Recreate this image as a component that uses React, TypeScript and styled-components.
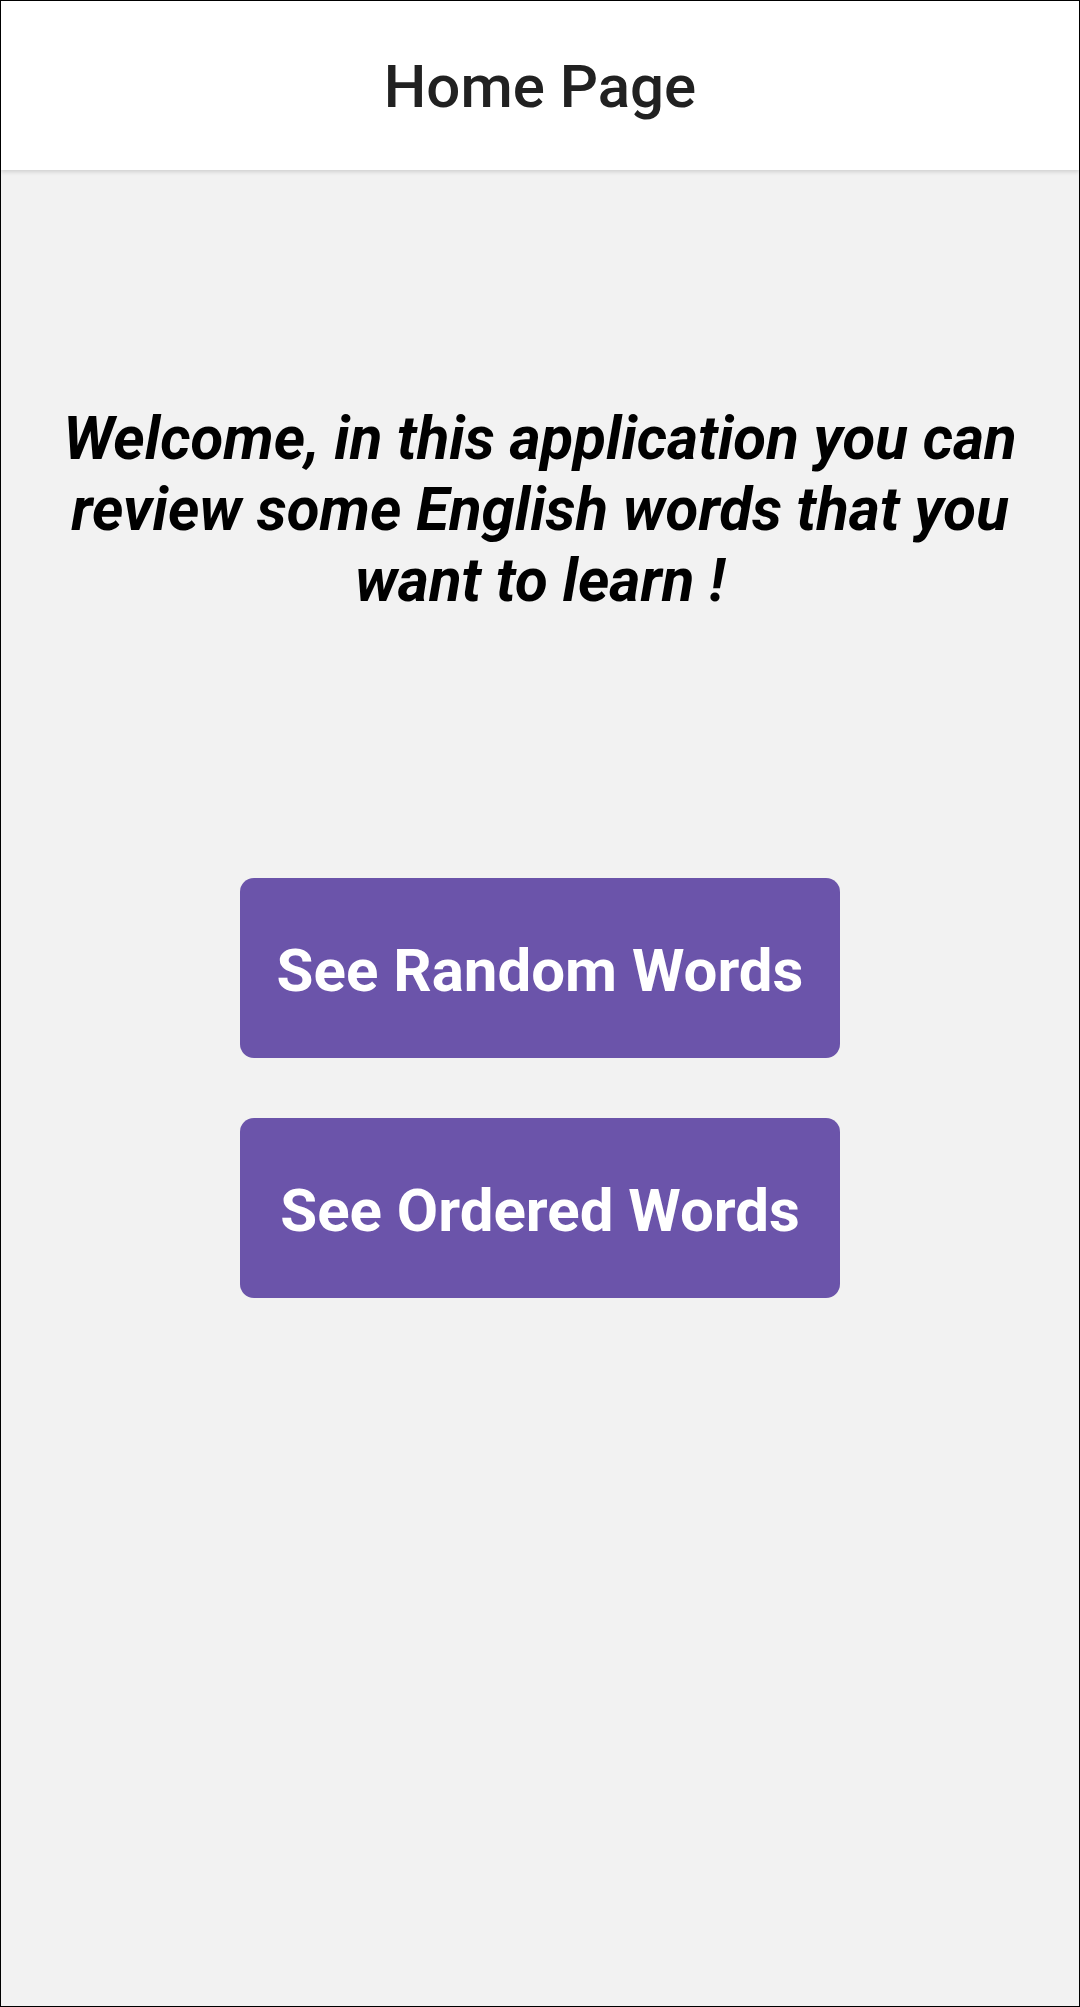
import React from "react";
import styled, { createGlobalStyle } from "styled-components";

const Global = createGlobalStyle`
  html, body { margin: 0; padding: 0; }
  body { font-family: Roboto, "Noto Sans", sans-serif; background: #f2f2f2; }
  * { box-sizing: border-box; }
`;

const Screen = styled.div`
  width: 1080px;
  height: 2007px;
  border: 1px solid #000;
  background: #f2f2f2;
  display: flex;
  flex-direction: column;
  overflow: hidden;
`;

const Header = styled.header`
  height: 169px;
  flex: none;
  background: #ffffff;
  display: flex;
  align-items: center;
  justify-content: center;
  box-shadow: 0 2px 4px rgba(0, 0, 0, 0.14);
  position: relative;
  z-index: 1;
`;

const Title = styled.h1`
  margin: 0;
  font-family: Roboto, sans-serif;
  font-weight: 500;
  font-size: 60px;
  color: #212121;
  line-height: 1;
  padding-top: 2px;
`;

const Main = styled.main`
  display: flex;
  flex-direction: column;
  align-items: center;
  padding: 233px 20px 0;
`;

const Welcome = styled.p`
  margin: 0;
  font-family: Roboto, sans-serif;
  font-style: italic;
  font-weight: 700;
  font-size: 60px;
  line-height: 71px;
  color: #000;
  text-align: center;
`;

const Buttons = styled.div`
  margin-top: 262px;
  display: flex;
  flex-direction: column;
  gap: 60px;
`;

const ActionButton = styled.button`
  width: 600px;
  height: 180px;
  border: none;
  border-radius: 14px;
  background: #6b54aa;
  color: #ffffff;
  font-family: Roboto, sans-serif;
  font-weight: 700;
  font-size: 60px;
  cursor: pointer;
  display: flex;
  align-items: center;
  justify-content: center;
  padding: 5px 0 0;
`;

export default function App() {
  return (
    <>
      <Global />
      <Screen>
        <Header>
          <Title>Home Page</Title>
        </Header>
        <Main>
          <Welcome>
            Welcome, in this application you can review some English words that you want to learn !
          </Welcome>
          <Buttons>
            <ActionButton>See Random Words</ActionButton>
            <ActionButton>See Ordered Words</ActionButton>
          </Buttons>
        </Main>
      </Screen>
    </>
  );
}
